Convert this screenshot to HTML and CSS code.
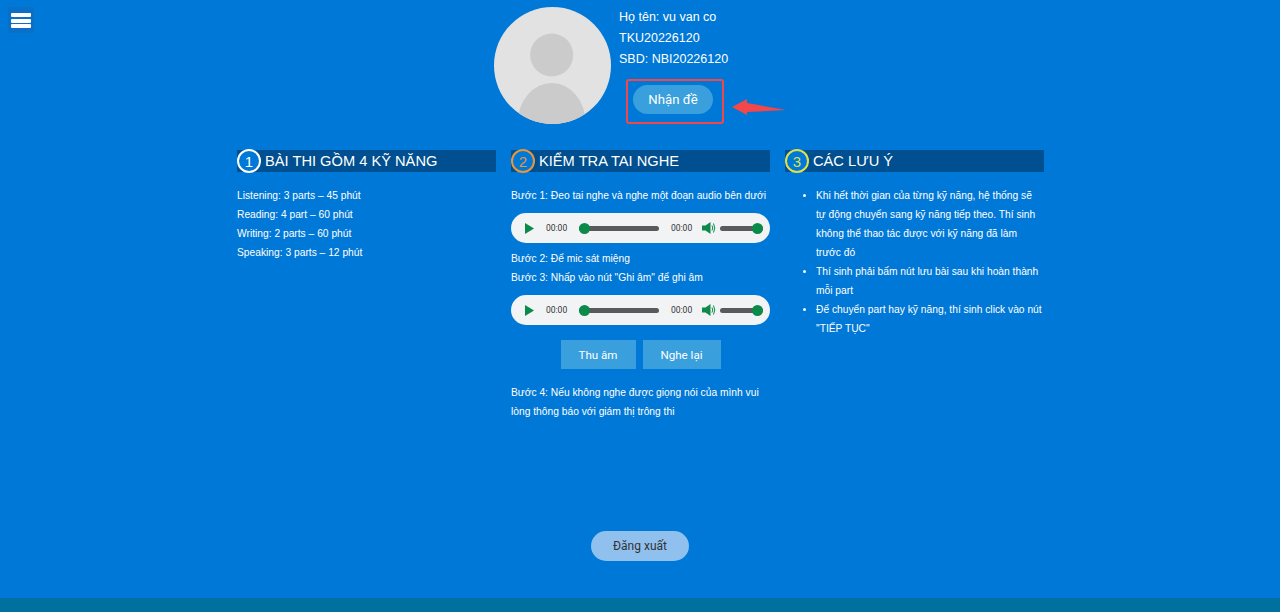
FILE: index.html
```html
<!DOCTYPE html>
<html lang="vi">
<head>
    <meta charset="UTF-8">
    <meta name="viewport" content="width=device-width, initial-scale=1.0">
    <title>Bài thi</title>
    <link rel="stylesheet" href="styles.css">
</head>
<body>
    <button class="menu-button" aria-label="Menu">
        <span></span><span></span><span></span>
    </button>

    <header class="profile">
        <svg class="avatar" viewBox="0 0 117 117">
            <defs><clipPath id="avatar-clip"><circle cx="58.5" cy="58.5" r="58.5"/></clipPath></defs>
            <circle cx="58.5" cy="58.5" r="58.5" fill="#e2e2e2"/>
            <g clip-path="url(#avatar-clip)" fill="#cbcbcb">
                <circle cx="57.7" cy="48" r="21.5"/>
                <ellipse cx="57.7" cy="116" rx="34" ry="40"/>
            </g>
        </svg>
        <div class="profile-info">
            <p>Họ tên: vu van co</p>
            <p>TKU20226120</p>
            <p>SBD: NBI20226120</p>
            <div class="highlight-box">
                <button class="pill-button">Nhận đề</button>
                <svg class="arrow" width="56" height="22" viewBox="0 0 56 22">
                    <path d="M1 9 L16 1 L16 5 L55 12 L16 14 L16 17 Z" fill="#f4474a"/>
                </svg>
            </div>
        </div>
    </header>

    <main class="columns">
        <section class="column">
            <h2 class="column-title"><span class="step step-white">1</span>BÀI THI GỒM 4 KỸ NĂNG</h2>
            <div class="column-body">
                <p>Listening: 3 parts – 45 phút</p>
                <p>Reading: 4 part – 60 phút</p>
                <p>Writing: 2 parts – 60 phút</p>
                <p>Speaking: 3 parts – 12 phút</p>
            </div>
        </section>

        <section class="column">
            <h2 class="column-title"><span class="step step-orange">2</span>KIỂM TRA TAI NGHE</h2>
            <div class="column-body">
                <p>Bước 1: Đeo tai nghe và nghe một đoạn audio bên dưới</p>
                <div class="player">
                    <svg class="play" width="9" height="11" viewBox="0 0 9 11"><path d="M0 0 L9 5.5 L0 11 Z"/></svg>
                    <span class="time time-start">00:00</span>
                    <span class="track track-long"></span>
                    <span class="time time-end">00:00</span>
                    <svg class="speaker" width="14" height="14" viewBox="0 0 14 14">
                        <path class="speaker-cone" d="M0 4.5 H3.5 L8.5 1 V13 L3.5 9.5 H0 Z"/>
                        <path class="speaker-wave" d="M10 4.5 Q11.5 7 10 9.5 M11.5 2.5 Q14 7 11.5 11.5"/>
                    </svg>
                    <span class="track track-volume"></span>
                </div>
                <p>Bước 2: Để mic sát miệng</p>
                <p>Bước 3: Nhấp vào nút "Ghi âm" để ghi âm</p>
                <div class="player">
                    <svg class="play" width="9" height="11" viewBox="0 0 9 11"><path d="M0 0 L9 5.5 L0 11 Z"/></svg>
                    <span class="time time-start">00:00</span>
                    <span class="track track-long"></span>
                    <span class="time time-end">00:00</span>
                    <svg class="speaker" width="14" height="14" viewBox="0 0 14 14">
                        <path class="speaker-cone" d="M0 4.5 H3.5 L8.5 1 V13 L3.5 9.5 H0 Z"/>
                        <path class="speaker-wave" d="M10 4.5 Q11.5 7 10 9.5 M11.5 2.5 Q14 7 11.5 11.5"/>
                    </svg>
                    <span class="track track-volume"></span>
                </div>
                <div class="record-buttons">
                    <button class="square-button btn-record">Thu âm</button>
                    <button class="square-button btn-replay">Nghe lại</button>
                </div>
                <p>Bước 4: Nếu không nghe được giọng nói của mình vui lòng thông báo với giám thị trông thi</p>
            </div>
        </section>

        <section class="column">
            <h2 class="column-title"><span class="step step-yellow">3</span>CÁC LƯU Ý</h2>
            <ul class="column-body notes">
                <li>Khi hết thời gian của từng kỹ năng, hệ thống sẽ tự động chuyển sang kỹ năng tiếp theo. Thí sinh không thể thao tác được với kỹ năng đã làm trước đó</li>
                <li>Thí sinh phải bấm nút lưu bài sau khi hoàn thành mỗi part</li>
                <li>Để chuyển part hay kỹ năng, thí sinh click vào nút "TIẾP TỤC"</li>
            </ul>
        </section>
    </main>

    <div class="logout-row">
        <button class="logout-button">Đăng xuất</button>
    </div>

    <footer class="footer-band"></footer>
</body>
</html>
```

FILE: styles.css
```css
* {
    box-sizing: border-box;
}

html, body {
    height: 612px;
    overflow: hidden;
}

body {
    margin: 0;
    display: flex;
    flex-direction: column;
    font-family: "Liberation Sans", Arial, sans-serif;
    background-color: #0078d7;
    color: #fff;
}

p {
    margin: 0;
}

button {
    border: none;
    font-family: Roboto, Arial, sans-serif;
    cursor: pointer;
}

.menu-button {
    position: absolute;
    top: 7px;
    left: 8px;
    width: 26px;
    height: 26px;
    padding: 6px 3px 5px;
    display: flex;
    flex-direction: column;
    justify-content: space-between;
    background-color: #0a6fc6;
    border-radius: 3px;
}

.menu-button span {
    display: block;
    height: 4px;
    background-color: #fff;
    border-radius: 1px;
}

.profile {
    display: flex;
    justify-content: center;
    padding-top: 7px;
    height: 149px;
    padding-left: 5px;
}

.avatar {
    width: 117px;
    height: 117px;
    flex-shrink: 0;
}

.profile-info {
    width: 172px;
    margin-left: 8px;
    font-size: 12.5px;
    line-height: 21px;
}

.highlight-box {
    position: relative;
    width: 98px;
    height: 45px;
    margin: 9px 0 0 7px;
    border: 2px solid #f4474a;
    border-radius: 3px;
    padding: 4px 0 0 5px;
}

.pill-button {
    display: block;
    width: 80px;
    height: 29px;
    font-size: 13.2px;
    color: #fff;
    background-color: #3a9fdd;
    border-radius: 15px;
}

.arrow {
    position: absolute;
    left: 103px;
    top: 17px;
}

.columns {
    flex: 1;
    display: flex;
    justify-content: center;
    gap: 15px;
    padding-left: 1px;
}

.column {
    width: 259px;
}

.column-title {
    display: flex;
    align-items: center;
    height: 22px;
    margin: 1px 0 0;
    font-size: 14.66px;
    font-weight: normal;
    background-color: #004f90;
    white-space: nowrap;
}

.step {
    width: 24px;
    height: 24px;
    margin-right: 4px;
    flex-shrink: 0;
    display: flex;
    align-items: center;
    justify-content: center;
    font-size: 15px;
    border: 2px solid;
    border-radius: 50%;
    background-color: #0078d7;
}

.step-white {
    border-color: #fff;
}

.step-orange {
    border-color: #e8963a;
    color: #e8963a;
}

.step-yellow {
    border-color: #dfe04a;
    color: #dfe04a;
}

.column-body {
    margin: 14px 0 0;
    font-size: 10.25px;
    line-height: 19px;
}

.player {
    display: flex;
    align-items: center;
    height: 30px;
    margin: 8px 0 6px;
    padding-left: 14px;
    background-color: #f1f3f4;
    border-radius: 15px;
    color: #333;
}

.play {
    fill: #0b8a4a;
    flex-shrink: 0;
}

.time {
    width: 21px;
    font-family: Roboto, Arial, sans-serif;
    font-size: 8.5px;
    line-height: 12px;
    white-space: nowrap;
}

.time-start {
    margin-left: 12px;
}

.track {
    position: relative;
    display: block;
    height: 5px;
    background-color: #5a5a5a;
    border-radius: 3px;
}

.track::after {
    content: "";
    position: absolute;
    top: -3px;
    width: 11px;
    height: 11px;
    background-color: #0b8a4a;
    border-radius: 50%;
}

.track-long {
    width: 80px;
    margin-left: 12px;
}

.track-long::after {
    left: 0;
}

.track-volume {
    width: 43px;
    margin-left: 4px;
}

.track-volume::after {
    right: 0;
}

.time-end {
    margin-left: 12px;
}

.speaker {
    margin-left: 10px;
    flex-shrink: 0;
}

.speaker-cone {
    fill: #0b8a4a;
}

.speaker-wave {
    fill: none;
    stroke: #0b8a4a;
    stroke-width: 1;
}

.record-buttons {
    display: flex;
    justify-content: center;
    gap: 7px;
    margin: 15px 0 14px;
}

.square-button {
    height: 29px;
    font-size: 11.6px;
    color: #fff;
    background-color: #3a9fdd;
}

.btn-record {
    width: 75px;
}

.btn-replay {
    width: 78px;
}

.notes {
    padding: 0 0 0 31px;
}

.logout-row {
    display: flex;
    justify-content: center;
    padding-bottom: 37px;
}

.logout-button {
    width: 98px;
    height: 30px;
    font-size: 12px;
    color: #333;
    background-color: #8fc0ee;
    border-radius: 15px;
}

.footer-band {
    height: 14px;
    background-color: #00709f;
}
```
